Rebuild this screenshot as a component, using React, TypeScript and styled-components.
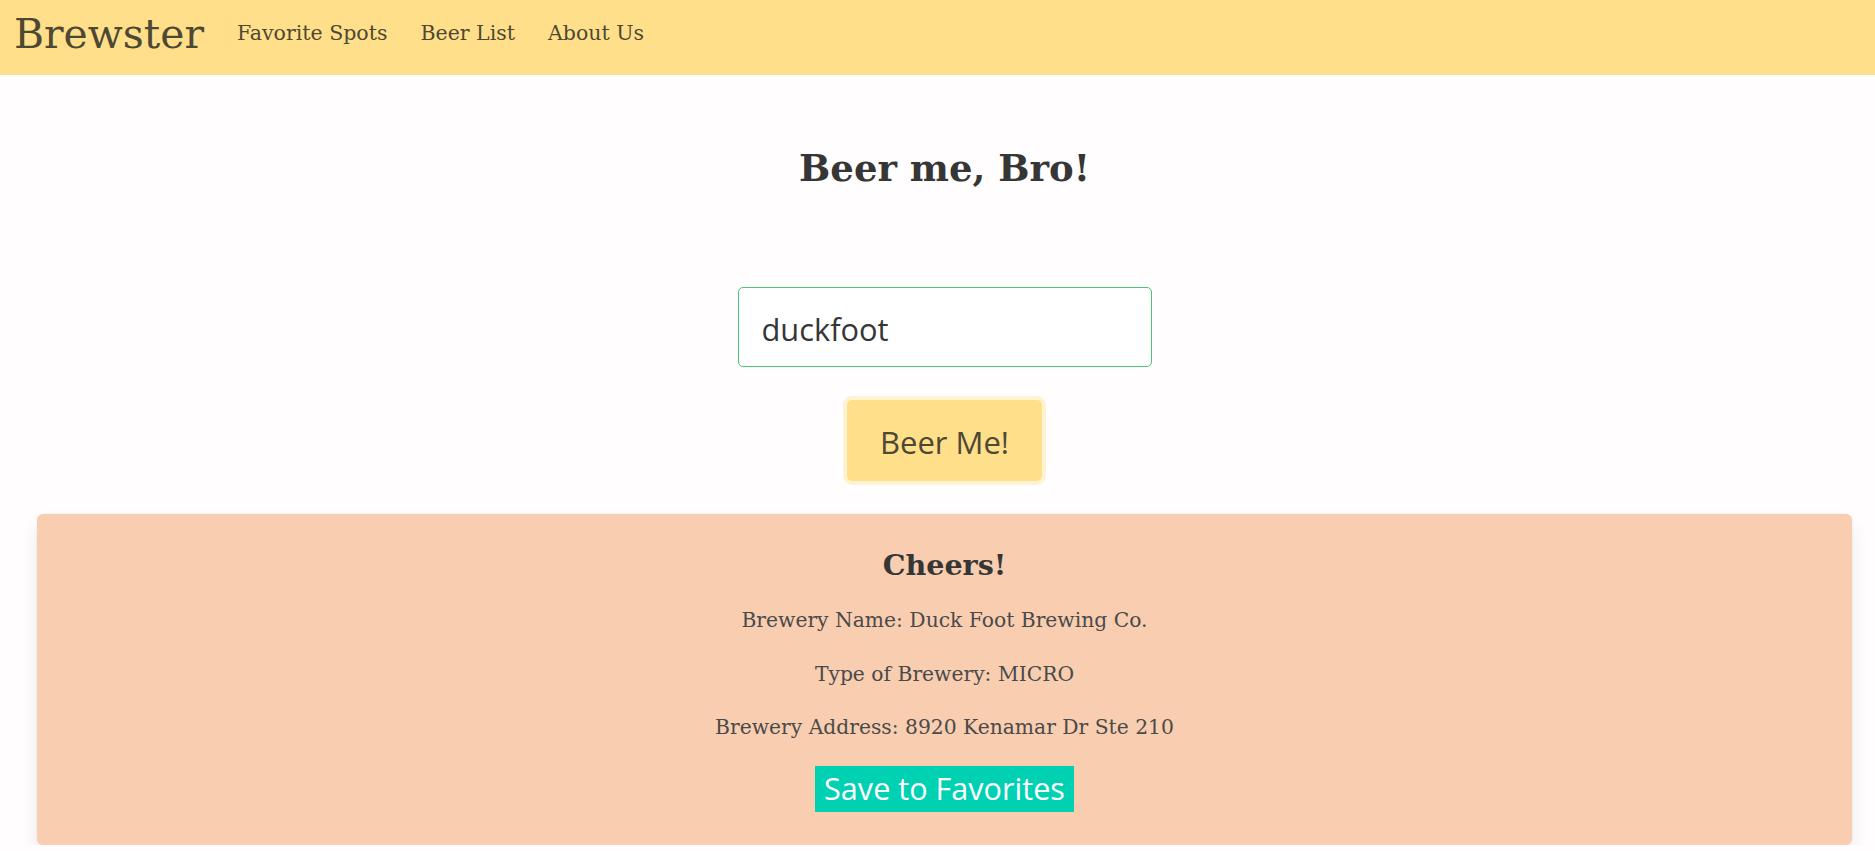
import React from "react";
import styled, { createGlobalStyle } from "styled-components";

const SERIF = `"DejaVu Serif", serif`;
const SANS = `"Open Sans", sans-serif`;

const Global = createGlobalStyle`
  html, body { margin: 0; padding: 0; background: #fffdfd; }
  body { font-family: ${SERIF}; color: #4a4a4a; }
  * { box-sizing: border-box; }
`;

const Nav = styled.nav`
  height: 75px;
  background: #ffdf8a;
  display: flex;
  align-items: center;
  padding: 0 0 7px 14px;
  gap: 33px;
  color: #4d4833;
`;
const Brand = styled.a`
  font-size: 40.9px;
  text-decoration: none;
  color: inherit;
`;
const NavLink = styled.a`
  font-size: 20.5px;
  text-decoration: none;
  color: inherit;
  padding-bottom: 3px;
`;
const Main = styled.main`
  display: flex;
  flex-direction: column;
  align-items: center;
  padding-left: 14px;
`;
const Title = styled.h1`
  margin: 71px 0 0;
  font-size: 37px;
  line-height: 44px;
  font-weight: 700;
  color: #363636;
`;
const SearchInput = styled.input`
  margin-top: 97px;
  width: 414px;
  height: 80px;
  border: 1px solid #48c774;
  border-radius: 5px;
  padding: 4px 23px 0;
  font-family: ${SANS};
  font-size: 30.8px;
  color: #363636;
  background: #fff;
  outline: none;
`;
const BeerButton = styled.button`
  margin-top: 33px;
  width: 195px;
  height: 81px;
  border: none;
  border-radius: 5px;
  padding: 3px 0 0;
  background: #ffdf8a;
  box-shadow: 0 0 0 4px #fff3d4;
  font-family: ${SANS};
  font-size: 31px;
  color: #4d4833;
`;
const Card = styled.section`
  align-self: stretch;
  margin: 33px 23px 0;
  background: #f8cdb0;
  border-radius: 6px;
  box-shadow: 0 10px 20px -2px rgba(10, 10, 10, 0.1), 0 0 0 1px rgba(10, 10, 10, 0.02);
  display: flex;
  flex-direction: column;
  align-items: center;
  padding: 33px 0 33px;
`;
const CardTitle = styled.h2`
  margin: 0;
  font-size: 28.6px;
  line-height: 36px;
  font-weight: 700;
  color: #363636;
`;
const Line = styled.p`
  margin: 22px 0 0;
  font-size: 20.3px;
  line-height: 30px;
  color: #4a4a4a;
  & + & {
    margin-top: 23.5px;
  }
`;
const SaveButton = styled.button`
  margin-top: 24px;
  height: 46px;
  border: none;
  border-radius: 0;
  background: #00d1b2;
  color: #fff;
  font-family: ${SANS};
  font-size: 30.6px;
  line-height: 1;
  padding: 0 9px 2px;
`;

export default function App() {
  return (
    <>
      <Global />
      <Nav>
        <Brand href="#">Brewster</Brand>
        <NavLink href="#">Favorite Spots</NavLink>
        <NavLink href="#">Beer List</NavLink>
        <NavLink href="#">About Us</NavLink>
      </Nav>
      <Main>
        <Title>Beer me, Bro!</Title>
        <SearchInput defaultValue="duckfoot" />
        <BeerButton>Beer Me!</BeerButton>
        <Card>
          <CardTitle>Cheers!</CardTitle>
          <Line>Brewery Name: Duck Foot Brewing Co.</Line>
          <Line>Type of Brewery: MICRO</Line>
          <Line>Brewery Address: 8920 Kenamar Dr Ste 210</Line>
          <SaveButton>Save to Favorites</SaveButton>
        </Card>
      </Main>
    </>
  );
}
